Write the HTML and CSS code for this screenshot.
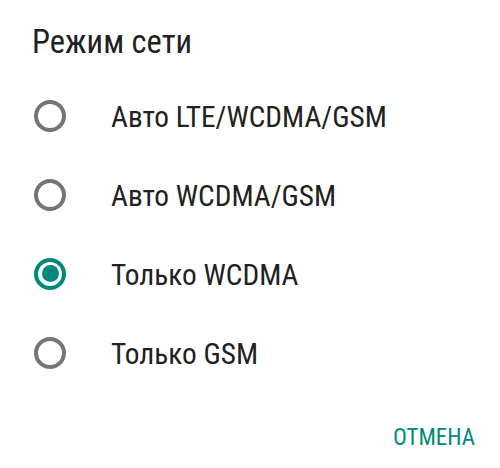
FILE: index.html
```html
<!DOCTYPE html>
<html lang="ru">
<head>
<meta charset="utf-8">
<link rel="stylesheet" href="styles.css">
</head>
<body>
<div class="dialog">
  <h1 class="title">Режим сети</h1>
  <ul class="options">
    <li class="option"><span class="radio"></span><span class="label">Авто LTE/WCDMA/GSM</span></li>
    <li class="option"><span class="radio"></span><span class="label">Авто WCDMA/GSM</span></li>
    <li class="option"><span class="radio checked"></span><span class="label">Только WCDMA</span></li>
    <li class="option"><span class="radio"></span><span class="label">Только GSM</span></li>
  </ul>
  <div class="actions"><button class="btn">ОТМЕНА</button></div>
</div>
</body>
</html>
```
FILE: styles.css
```css
html, body {
  margin: 0;
  padding: 0;
  background: #ffffff;
}
.dialog {
  width: 500px;
  height: 468px;
  font-family: Roboto, "Noto Sans", sans-serif;
  font-stretch: condensed;
  color: #212121;
  box-sizing: border-box;
  padding-top: 22px;
}
.title {
  margin: 0 0 0 32px;
  font-size: 32.5px;
  font-weight: 400;
  line-height: 40px;
  height: 40px;
}
.options {
  list-style: none;
  margin: 14px 0 0 0;
  padding: 0;
}
.option {
  display: flex;
  align-items: center;
  height: 79px;
  padding-left: 34px;
}
.radio {
  width: 24px;
  height: 24px;
  border: 4px solid #757575;
  border-radius: 50%;
  flex: none;
  display: flex;
  align-items: center;
  justify-content: center;
}
.radio.checked {
  border-color: #00897b;
}
.radio.checked::after {
  content: "";
  width: 17px;
  height: 17px;
  border-radius: 50%;
  background: #00897b;
}
.label {
  margin-left: 45px;
  font-size: 29.3px;
  line-height: 32px;
  padding-top: 3px;
}
.actions {
  display: flex;
  justify-content: flex-end;
  padding-right: 25px;
  margin-top: 32px;
}
.btn {
  border: none;
  background: none;
  padding: 0;
  font-family: inherit;
  font-stretch: condensed;
  font-size: 23px;
  color: #00897b;
  line-height: 28px;
}
```
